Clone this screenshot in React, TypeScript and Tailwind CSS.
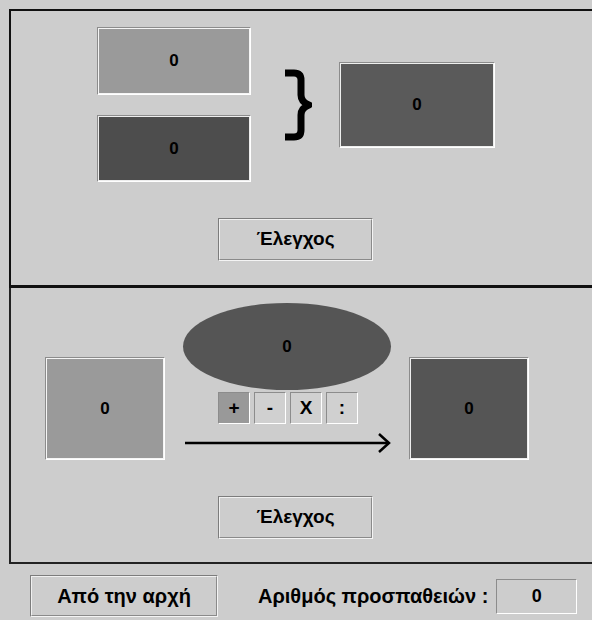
import React from "react";

const font = { fontFamily: '"Liberation Sans", Arial, sans-serif' };

function Field({ className, children }: { className: string; children: React.ReactNode }) {
  return (
    <div
      className={`flex items-center justify-center border border-t-[#8c8c8c] border-l-[#8c8c8c] border-r-white border-b-white text-[17px] font-bold text-black ${className}`}
    >
      <div className="flex h-full w-full items-center justify-center border border-white/90">{children}</div>
    </div>
  );
}

function Button({ className, children }: { className: string; children: React.ReactNode }) {
  return (
    <div
      className={`flex items-center justify-center border border-t-[#7c7c7c] border-l-[#7c7c7c] border-r-[#f4f4f4] border-b-[#f4f4f4] bg-[#cdcdcd] font-bold text-black ${className}`}
    >
      <div className="flex h-full w-full items-center justify-center border border-t-[#f0f0f0] border-l-[#f0f0f0] border-r-[#8a8a8a] border-b-[#8a8a8a]">
        {children}
      </div>
    </div>
  );
}

function Op({ label, active }: { label: string; active?: boolean }) {
  return (
    <div
      className={`flex h-[32px] w-[32px] items-center justify-center border border-t-[#8c8c8c] border-l-[#8c8c8c] border-r-white border-b-white text-[19px] font-bold ${
        active ? "bg-[#999999]" : "bg-[#d0d0d0]"
      }`}
    >
      {label}
    </div>
  );
}

export default function App() {
  return (
    <div className="h-[620px] w-[592px] overflow-hidden bg-[#cdcdcd] pt-[9px] pl-[9px]" style={font}>
      {/* top panel */}
      <div className="h-[279px] border-t-2 border-l-2 border-b-[3px] border-[#111]">
        <div className="flex items-center pt-[16px] pl-[86px]">
          <div className="flex flex-col gap-[20px]">
            <Field className="h-[68px] w-[154px] bg-[#9a9a9a]">0</Field>
            <Field className="h-[67px] w-[154px] bg-[#4d4d4d]">0</Field>
          </div>
          <svg className="ml-[31px]" width="30" height="72" viewBox="0 0 30 72">
            <path
              d="M3 4 H12 Q19 4 19 11 V26 Q19 33 27 36 Q19 39 19 46 V61 Q19 68 12 68 H3"
              fill="none"
              stroke="#000"
              strokeWidth="7"
              strokeLinejoin="round"
            />
          </svg>
          <Field className="ml-[27px] h-[86px] w-[156px] bg-[#5a5a5a]">0</Field>
        </div>
        <Button className="mt-[36px] ml-[207px] h-[43px] w-[155px] text-[19px]">Έλεγχος</Button>
      </div>

      {/* bottom panel */}
      <div className="h-[276px] border-l-2 border-b-2 border-[#222]">
        <div className="flex items-start pt-[15px] pl-[34px]">
          <Field className="mt-[54px] h-[103px] w-[120px] bg-[#9a9a9a]">0</Field>
          <div className="ml-[18px] flex w-[208px] flex-col">
            <div className="flex h-[87px] w-[208px] items-center justify-center rounded-[50%] bg-[#555555] text-[17px] font-bold">
              0
            </div>
            <div className="mt-[2px] ml-[35px] flex gap-[4px]">
              <Op label="+" active />
              <Op label="-" />
              <Op label="X" />
              <Op label=":" />
            </div>
            <svg className="mt-[6px] ml-[2px]" width="206" height="26" viewBox="0 0 206 26">
              <line x1="0" y1="13" x2="203" y2="13" stroke="#000" strokeWidth="2.5" />
              <path d="M194 4 L204 13 L194 22" fill="none" stroke="#000" strokeWidth="2.5" />
            </svg>
          </div>
          <Field className="ml-[18px] mt-[54px] h-[103px] w-[120px] bg-[#555555]">0</Field>
        </div>
        <Button className="mt-[36px] ml-[207px] h-[43px] w-[155px] text-[19px]">Έλεγχος</Button>
      </div>

      {/* bottom bar */}
      <div className="flex items-center pt-[11px] pl-[21px]">
        <Button className="h-[42px] w-[188px] text-[20px]">Από την αρχή</Button>
        <span className="ml-[40px] text-[20px] font-bold">Αριθμός προσπαθειών :</span>
        <div className="ml-[8px] flex h-[35px] w-[81px] items-center justify-center border border-t-[#8c8c8c] border-l-[#8c8c8c] border-r-white border-b-white text-[18px] font-bold">
          0
        </div>
      </div>
    </div>
  );
}
